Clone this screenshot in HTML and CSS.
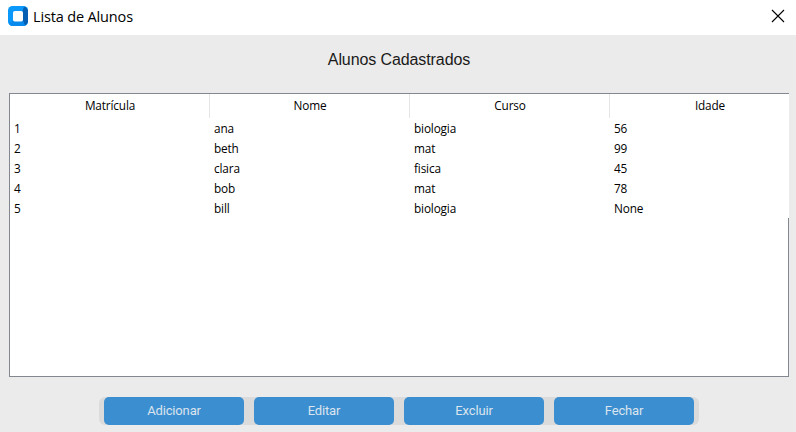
FILE: index.html
```html
<!DOCTYPE html>
<html lang="pt-BR">
<head>
<meta charset="utf-8">
<title>Lista de Alunos</title>
<link rel="stylesheet" href="styles.css">
</head>
<body>
<header class="titlebar">
  <svg class="logo" width="20" height="20" viewBox="0 0 20 20">
    <rect width="20" height="20" rx="4.5" fill="#0a98fb"/>
    <path d="M14.5 5L16 .8Q20 1.5 20 5V15Q20 18 17 19.4L14.5 15.5Z" fill="#0560b4"/>
    <path d="M1 17L5 14.5H15L17 19.4Q16 20 15 20H5Q2 20 1 17Z" fill="#078aeb"/>
    <rect x="5" y="5" width="10" height="10.6" rx="1.8" fill="#fff"/>
  </svg>
  <h1 class="window-title"><span>Lista de Alunos</span></h1>
  <svg class="close" width="12" height="12" viewBox="0 0 12 12"><path d="M0 0L12 12M12 0L0 12" stroke="#000" stroke-width="1.1"/></svg>
</header>
<main class="content">
  <h2 class="heading"><span>Alunos Cadastrados</span></h2>
  <section class="tree">
    <div class="row head"><div>Matrícula</div><div>Nome</div><div>Curso</div><div>Idade</div></div>
    <div class="row"><div>1</div><div>ana</div><div>biologia</div><div>56</div></div>
    <div class="row"><div>2</div><div>beth</div><div>mat</div><div>99</div></div>
    <div class="row"><div>3</div><div>clara</div><div>fisica</div><div>45</div></div>
    <div class="row"><div>4</div><div>bob</div><div>mat</div><div>78</div></div>
    <div class="row"><div>5</div><div>bill</div><div>biologia</div><div>None</div></div>
    <div class="blank"></div>
  </section>
  <nav class="actions">
    <button>Adicionar</button><button>Editar</button><button>Excluir</button><button>Fechar</button>
  </nav>
</main>
</body>
</html>
```
FILE: styles.css
```css
* { box-sizing: border-box; }
body { margin: 0; width: 796px; height: 432px; overflow: hidden; background: #ebebeb; font-family: "Open Sans", sans-serif; }
.titlebar { height: 35px; background: #fff; display: flex; align-items: center; padding: 0 12px 3px 8px; }
.window-title { margin: 2px auto 0 5px; font-size: 14.5px; font-weight: 400; line-height: 20px; letter-spacing: -0.15px; color: #000; }
.close { display: block; overflow: visible; }
.content { padding: 0 7px 0 9px; }
.heading { margin: 0; height: 58px; padding-top: 15px; text-align: center; font: 400 16px/20px "Liberation Sans", sans-serif; letter-spacing: -0.1px; color: #1a1a1a; }
.tree { width: 780px; height: 284px; border: solid #828790; border-width: 1px 0 1px 1px; background: #fff; display: flex; flex-direction: column; overflow: hidden; }
.row { display: grid; grid-template-columns: repeat(4, 200px); height: 20px; flex: none; font-size: 11.8px; line-height: 20px; letter-spacing: -0.15px; color: #000; }
.row div { padding-left: 4px; }
.row.head { height: 24px; line-height: 22px; }
.row.head div { height: 24px; padding: 0 0 0 1px; text-align: center; border-right: 1px solid #e5e5e5; }
.blank { flex: 1; border-right: 1px solid #828790; }
.actions { width: 600px; height: 28px; margin: 20px 0 0 90px; padding: 0 5px; display: flex; gap: 10px; background: #dbdbdb; border-radius: 6px; }
.actions button { width: 140px; height: 28px; padding: 0; border: 0; border-radius: 5px; background: #3b8ed0; color: #dce4ee; font: 400 13px/28px Roboto, sans-serif; letter-spacing: -0.15px; }
```
